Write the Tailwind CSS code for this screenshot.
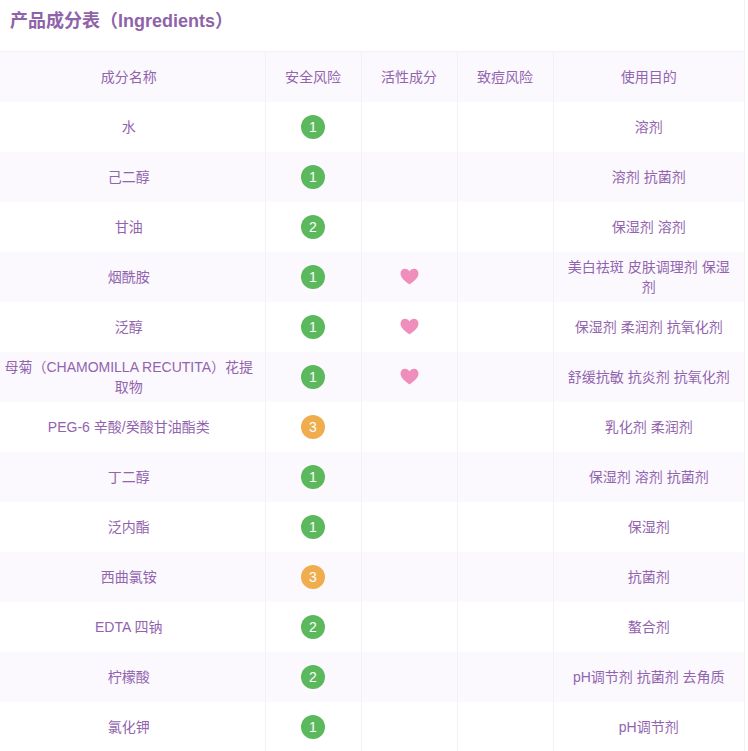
<!DOCTYPE html>
<html lang="zh"><head><meta charset="utf-8"><script src="https://cdn.jsdelivr.net/npm/@tailwindcss/browser@4"></script></head>
<body class="bg-white overflow-hidden font-['Liberation_Sans','Noto_Sans_CJK_SC',sans-serif] text-[#9264ae] text-sm">
<div class="w-[745px] border-r border-[#f3f1f6]">
<h3 class="h-[51px] pl-[10px] pt-[8px] text-lg leading-[26px] font-bold text-[#8f62a9]">产品成分表（Ingredients）</h3>
<table class="table-fixed w-full border-collapse text-center [&_td]:h-[50px] [&_th]:h-[50px] [&_td]:p-0 [&_th]:p-0 [&_td]:leading-5 [&_th]:font-normal [&_td:nth-child(-n+4)]:border-r [&_th:nth-child(-n+4)]:border-r [&_td]:border-[#f3f1f6] [&_th]:border-[#f3f1f6] [&_td:first-child]:pr-[7px] [&_th:first-child]:pr-[7px] [&_td:last-child]:px-[10px] [&_tbody_tr:nth-child(even)]:bg-[#fbf9fe]">
<colgroup><col class="w-[265px]"><col class="w-[96px]"><col class="w-[96px]"><col class="w-[96px]"><col></colgroup>
<thead><tr class="bg-[#fbf9fe] border-t border-[#f3f1f6]"><th>成分名称</th><th>安全风险</th><th>活性成分</th><th>致痘风险</th><th>使用目的</th></tr></thead>
<tbody>
<tr><td>水</td><td><span class="inline-flex size-6 items-center justify-center rounded-full bg-[#5cb85c] text-white align-middle">1</span></td><td></td><td></td><td>溶剂</td></tr>
<tr><td>己二醇</td><td><span class="inline-flex size-6 items-center justify-center rounded-full bg-[#5cb85c] text-white align-middle">1</span></td><td></td><td></td><td>溶剂 抗菌剂</td></tr>
<tr><td>甘油</td><td><span class="inline-flex size-6 items-center justify-center rounded-full bg-[#5cb85c] text-white align-middle">2</span></td><td></td><td></td><td>保湿剂 溶剂</td></tr>
<tr><td>烟酰胺</td><td><span class="inline-flex size-6 items-center justify-center rounded-full bg-[#5cb85c] text-white align-middle">1</span></td><td><svg class="mx-auto block" width="19" height="17" viewBox="0 0 19 17"><path fill="#ef8dbb" d="M9.5 16.5C6.5 14 .5 10.5.5 5.5.5 2.7 2.6.8 5 .8c1.900 0 3.500 1 4.500 2.700C10.500 1.800 12.100.8 14 .8c2.400 0 4.500 1.900 4.500 4.700 0 5-6 8.500-9 11z"/></svg></td><td></td><td>美白祛斑 皮肤调理剂 保湿剂</td></tr>
<tr><td>泛醇</td><td><span class="inline-flex size-6 items-center justify-center rounded-full bg-[#5cb85c] text-white align-middle">1</span></td><td><svg class="mx-auto block" width="19" height="17" viewBox="0 0 19 17"><path fill="#ef8dbb" d="M9.5 16.5C6.5 14 .5 10.5.5 5.5.5 2.7 2.6.8 5 .8c1.900 0 3.500 1 4.500 2.700C10.500 1.800 12.100.8 14 .8c2.400 0 4.500 1.900 4.500 4.700 0 5-6 8.500-9 11z"/></svg></td><td></td><td>保湿剂 柔润剂 抗氧化剂</td></tr>
<tr><td>母菊（CHAMOMILLA RECUTITA）花提取物</td><td><span class="inline-flex size-6 items-center justify-center rounded-full bg-[#5cb85c] text-white align-middle">1</span></td><td><svg class="mx-auto block" width="19" height="17" viewBox="0 0 19 17"><path fill="#ef8dbb" d="M9.5 16.5C6.5 14 .5 10.5.5 5.5.5 2.7 2.6.8 5 .8c1.900 0 3.500 1 4.500 2.700C10.500 1.800 12.100.8 14 .8c2.400 0 4.500 1.900 4.500 4.700 0 5-6 8.500-9 11z"/></svg></td><td></td><td>舒缓抗敏 抗炎剂 抗氧化剂</td></tr>
<tr><td>PEG-6 辛酸/癸酸甘油酯类</td><td><span class="inline-flex size-6 items-center justify-center rounded-full bg-[#f0ad4e] text-white align-middle">3</span></td><td></td><td></td><td>乳化剂 柔润剂</td></tr>
<tr><td>丁二醇</td><td><span class="inline-flex size-6 items-center justify-center rounded-full bg-[#5cb85c] text-white align-middle">1</span></td><td></td><td></td><td>保湿剂 溶剂 抗菌剂</td></tr>
<tr><td>泛内酯</td><td><span class="inline-flex size-6 items-center justify-center rounded-full bg-[#5cb85c] text-white align-middle">1</span></td><td></td><td></td><td>保湿剂</td></tr>
<tr><td>西曲氯铵</td><td><span class="inline-flex size-6 items-center justify-center rounded-full bg-[#f0ad4e] text-white align-middle">3</span></td><td></td><td></td><td>抗菌剂</td></tr>
<tr><td>EDTA 四钠</td><td><span class="inline-flex size-6 items-center justify-center rounded-full bg-[#5cb85c] text-white align-middle">2</span></td><td></td><td></td><td>螯合剂</td></tr>
<tr><td>柠檬酸</td><td><span class="inline-flex size-6 items-center justify-center rounded-full bg-[#5cb85c] text-white align-middle">2</span></td><td></td><td></td><td>pH调节剂 抗菌剂 去角质</td></tr>
<tr><td>氯化钾</td><td><span class="inline-flex size-6 items-center justify-center rounded-full bg-[#5cb85c] text-white align-middle">1</span></td><td></td><td></td><td>pH调节剂</td></tr>
</tbody></table></div>
</body></html>
